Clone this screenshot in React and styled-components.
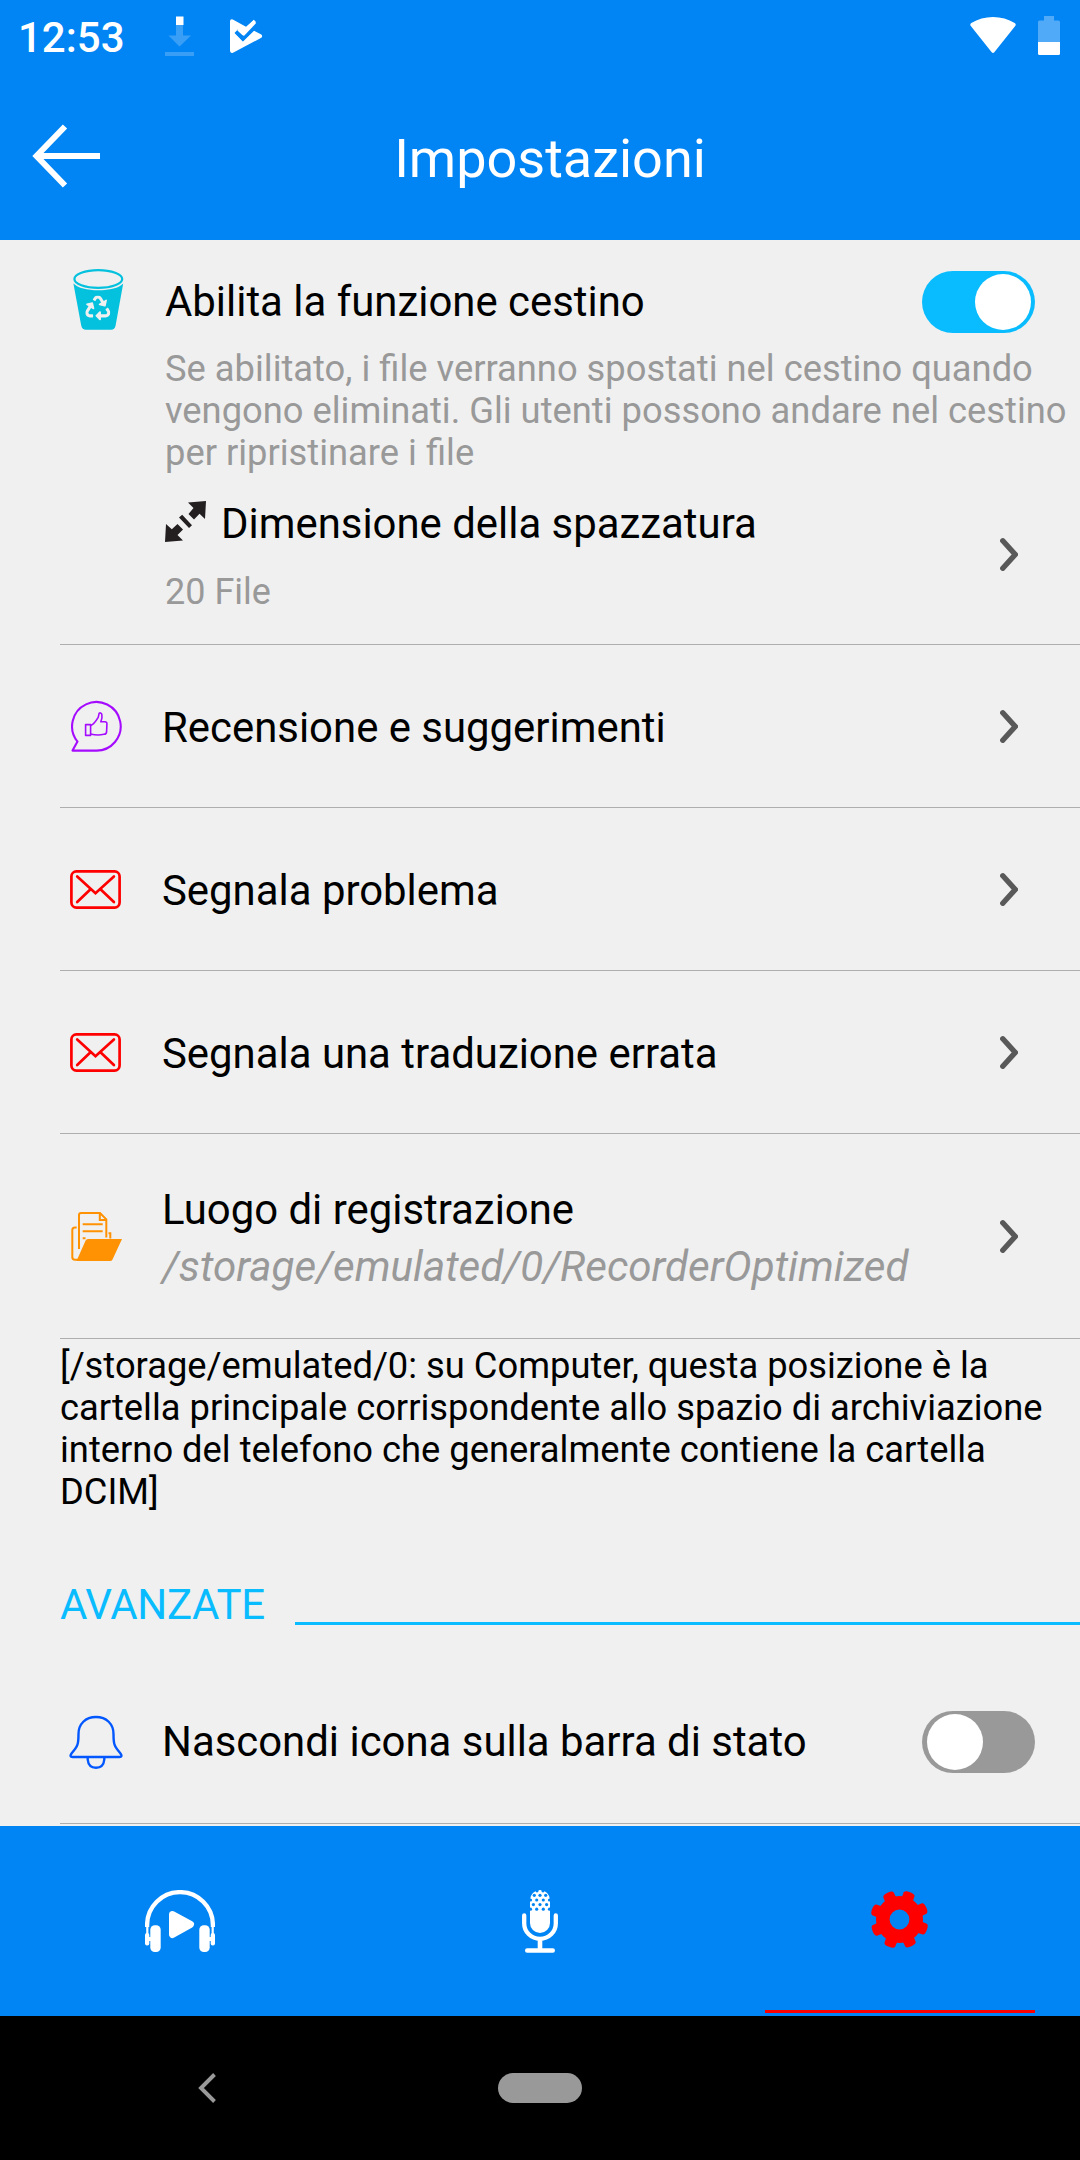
import React, { useState } from "react";
import styled, { createGlobalStyle } from "styled-components";
import { FaRecycle } from "react-icons/fa";

const c = {
  blue: "#0285f4",
  page: "#f0f0f0",
  line: "#aeaeae",
  muted: "#999999",
  accent: "#09bcff",
};

const GlobalStyle = createGlobalStyle`
  * { box-sizing: border-box; }
  body { margin: 0; background: ${c.page}; }
  svg { display: block; flex: none; }
`;

const Screen = styled.div`
  width: 1080px;
  height: 2160px;
  display: flex;
  flex-direction: column;
  overflow: hidden;
  background: ${c.page};
  color: #000;
  font-family: Roboto, "Noto Sans", sans-serif;
`;

const StatusBar = styled.header`
  height: 72px;
  flex: none;
  display: flex;
  align-items: flex-start;
  padding: 0 20px 0 18px;
  background: ${c.blue};
  color: #fff;
`;

const Clock = styled.span`
  width: 147px;
  padding-top: 14px;
  font-size: 42px;
  font-weight: 500;
  line-height: 48px;
`;

const StatusIcons = styled.div`
  display: flex;
  gap: ${(p) => p.$gap}px;
  padding-top: 16px;
  ${(p) => p.$end && "margin-left: auto;"}
`;

const TitleBar = styled.div`
  height: 168px;
  flex: none;
  display: flex;
  align-items: center;
  padding: 0 80px 0 32px;
  background: ${c.blue};
  color: #fff;
`;

const BackButton = styled.button`
  padding: 0;
  border: 0;
  background: none;
`;

const Title = styled.h1`
  flex: 1;
  margin: 0;
  padding-top: 5px;
  font-size: 54px;
  font-weight: 400;
  line-height: 64px;
  text-align: center;
`;

const Content = styled.main`
  flex: 1;
  min-height: 0;
  overflow: hidden;
  display: flex;
  flex-direction: column;
`;

const Divider = styled.hr`
  width: 1020px;
  height: 1px;
  flex: none;
  margin: 0 0 0 60px;
  border: 0;
  background: ${c.line};
`;

const Row = styled.div`
  height: ${(p) => p.$height || 162}px;
  flex: none;
  display: flex;
  align-items: center;
  padding: 0 ${(p) => p.$right || 62}px 0 60px;
`;

const AdvancedRow = styled(Row)`
  margin-top: 36px;
`;

const IconSlot = styled.div`
  width: ${(p) => p.$width || 102}px;
  flex: none;
  display: flex;
  padding: ${(p) => p.$top || 0}px 0 0 ${(p) => p.$left}px;
`;

const Texts = styled.div`
  flex: 1;
  display: flex;
  flex-direction: column;
  padding-top: ${(p) => p.$top || 0}px;
`;

const Label = styled.span`
  font-size: 41.9px;
  line-height: ${(p) => p.$line || 50}px;
  white-space: nowrap;
`;

const Path = styled(Label)`
  color: ${c.muted};
  font-size: 42.15px;
  font-style: italic;
`;

const TrashSection = styled.section`
  height: 404px;
  flex: none;
`;

const Description = styled.p`
  margin: 0 0 0 165px;
  font-size: 36.32px;
  line-height: 42px;
  color: ${c.muted};
  white-space: pre-line;
`;

const SizeRow = styled.div`
  display: flex;
  align-items: center;
  padding: 25px 62px 0 165px;
`;

const SizeTexts = styled.div`
  flex: 1;
  display: flex;
  flex-direction: column;
  gap: 22px;
`;

const SizeTitle = styled.div`
  display: flex;
  align-items: center;
  gap: 15px;
`;

const SizeValue = styled.span`
  font-size: 36px;
  line-height: 42px;
  color: ${c.muted};
`;

const Raised = styled.span`
  padding-bottom: 5px;
`;

const Track = styled.button`
  width: 113px;
  height: 62px;
  flex: none;
  display: flex;
  align-items: flex-start;
  justify-content: ${(p) => (p.$on ? "flex-end" : "flex-start")};
  padding: 3px 4px 0 5px;
  border: 0;
  border-radius: 31px;
  background: ${(p) => (p.$on ? c.accent : c.muted)};
`;

const Knob = styled.span`
  width: 56px;
  height: 56px;
  border-radius: 50%;
  background: #fff;
`;

const SwitchHolder = styled.div`
  padding-top: 16px;
`;

const Note = styled.p`
  margin: 6px 0 0 60px;
  font-size: 36.32px;
  line-height: 42px;
  white-space: pre-line;
`;

const SectionHead = styled.div`
  height: 46px;
  flex: none;
  display: flex;
  align-items: flex-end;
  gap: 30px;
  margin-top: 66px;
  padding-left: 60px;
  color: ${c.accent};
`;

const SectionTitle = styled.h2`
  width: 205px;
  margin: 0;
  font-size: 42px;
  font-weight: 400;
  line-height: 40px;
  letter-spacing: -0.3px;
`;

const SectionRule = styled.div`
  flex: 1;
  height: 3px;
  background: ${c.accent};
`;

const Tabs = styled.nav`
  height: 190px;
  flex: none;
  display: grid;
  grid-template-columns: repeat(3, 1fr);
  background: ${c.blue};
`;

const Tab = styled.button`
  display: flex;
  flex-direction: column;
  align-items: center;
  justify-content: space-between;
  padding: ${(p) => p.$top || 64}px 0 3px;
  border: 0;
  background: none;
`;

const TabMarker = styled.span`
  width: 270px;
  height: 3px;
  background: ${(p) => (p.$active ? "#ff0000" : "transparent")};
`;

const SystemNav = styled.footer`
  height: 144px;
  flex: none;
  display: flex;
  align-items: center;
  gap: 282px;
  padding-left: 198px;
  background: #000;
`;

const HomePill = styled.span`
  width: 84px;
  height: 30px;
  border-radius: 15px;
  background: ${c.muted};
`;

const DownloadIcon = () => (
  <svg width="29" height="40" viewBox="0 0 29 40">
    <path d="M11 9h7v10.500h8L14.500 30.500 3.500 19.500H11zM0 36h29v4H0z" fill="#fff" fillOpacity=".22" />
    <path d="M11 .5h7.500V9H11z" fill="#fff" />
  </svg>
);

const PlayCheckIcon = () => (
  <svg width="34" height="38" viewBox="0 0 34 38">
    <path
      d="M1 5.500Q1 2.500 3.800 3.400L17 10.800 24.500 4.200 26.500 6.200 14 18.800 8.800 13.400 5.500 17 14 25.500 25 14.800 32.300 18.600Q34 20.200 32.300 21.800L4 36.700Q1 37.600 1 34.500z"
      fill="#fff"
    />
    <path d="M16.500 12.200L24.800 3.800 26.800 5.800 13.700 19.500 8.300 14.500 9.500 13.500 13.700 17.300z" fill="#fff" />
    <path d="M6.500 17.200L8.800 15.200 13.700 19.700 18.500 15.200 24.300 12.500 25 14 13.700 25.300z" fill={c.blue} />
    <path d="M13.800 19L26 6" stroke="#fff" strokeWidth="3" />
  </svg>
);

const WifiIcon = () => (
  <svg width="46" height="38" viewBox="0 0 46 38">
    <path d="M1 10.200Q-.6 8.600 1.300 7Q11 1 23 1t21.700 6q1.900 1.600.3 3.200L24.300 36.300Q23 37.600 21.700 36.300z" fill="#fff" />
  </svg>
);

const BatteryIcon = () => (
  <svg width="22" height="39" viewBox="0 0 22 39">
    <path d="M6 0h10v4.500h4.500Q22 4.500 22 6v20H0V6q0-1.500 1.500-1.500H6z" fill="#fff" fillOpacity=".31" />
    <path d="M0 26h22v11.500q0 1.500-1.500 1.500h-19Q0 39 0 37.500z" fill="#fff" />
  </svg>
);

const BackArrow = () => (
  <svg width="68" height="64" viewBox="0 0 68 64">
    <path d="M33 2.500L4.500 32 33 61.500M5 32h63" fill="none" stroke="#fff" strokeWidth="6" />
  </svg>
);

const TrashIcon = () => (
  <svg width="51" height="62" viewBox="0 0 51 62">
    <ellipse cx="25.300" cy="10" rx="23.900" ry="8.800" fill="none" stroke="#04c1de" strokeWidth="2.200" />
    <path d="M.4 14.500C5 19 14 21.300 25.300 21.300S46 19 50.200 14.500L42.600 56.500Q41.700 60.800 38 60.800H13Q9.200 60.800 8.200 56.500z" fill="#04c1de" />
    <FaRecycle x="12.300" y="26.500" size="25" color={c.page} />
  </svg>
);

const ResizeIcon = () => (
  <svg width="41" height="41" viewBox="0 0 41 41">
    <path
      d="M41 0L23 1.500 28.500 7 23.500 13 29 18.500 34.500 12.800 40 18zM0 41L18 39.500 12.500 34 18 28.500 12.500 23 6.800 28.300 1 23zM14 16.500L17.200 13.700 27 24.300 24 27z"
      fill="#231f20"
    />
  </svg>
);

const ReviewIcon = () => (
  <svg width="52" height="52" viewBox="0 -0.600 52 52" fill="none" stroke="#a50bff" strokeWidth="2.100" strokeLinejoin="round">
    <path d="M25.600 50H2.500L7.500 41A24.300 24.300 0 1 1 25.600 50z" />
    <path d="M15.600 24H20.600V34.800H15.600z" strokeWidth="1.600" />
    <path
      d="M20.600 25C24.300 23.500 26.800 19 28.300 16.500L29.100 12.800Q30.500 11.500 31.800 13.500Q32.600 17 30.800 21.200H34.800Q37.300 21.400 36.900 23.800L36.600 31Q36.500 33.600 33.900 33.700C29.300 34.700 25.300 34.600 20.600 33.300"
      strokeWidth="1.600"
    />
  </svg>
);

const MailIcon = () => (
  <svg width="51" height="40" viewBox="0 -1 51 40" fill="none" stroke="#ff0000" strokeWidth="2.700" strokeLinecap="round">
    <rect x="1.400" y="1.400" width="48.200" height="36.200" rx="5" />
    <path d="M7.200 6.500L25.500 23.200 43.900 6.500M7.200 32L20.500 19.300M43.900 32L30.500 19.300" />
  </svg>
);

const FolderIcon = () => (
  <svg width="51" height="50" viewBox="0 -1 51 50" fill="none" stroke="#ff9203" strokeWidth="2">
    <path d="M5.700 15.500H4Q1.300 15.500 1.300 18V45Q1.300 47.800 4 47.800H7M8 37V3Q8 1 10 1H29L35.300 7.300V25.500M28.800 1V8H35.300M11.700 12.300H31.700M11.700 19.300H31.700M11.700 26.300H14.500M37.500 21.300H39.300V26.500" />
    <path d="M17 27H51L41.500 47.500Q40.800 49 39.200 49H5.500L14.500 28.800Q15.300 27 17 27z" fill="#ff9203" stroke="none" />
  </svg>
);

const BellIcon = () => (
  <svg width="54" height="56" viewBox="0 -1 54 56" fill="none" stroke="#0257ff" strokeWidth="2.400" strokeLinejoin="round">
    <path d="M27 2C16.500 2 9.500 9 9.500 19C9.500 29 9 31 2.500 38.500Q.2 42 3.500 42H50.500Q53.800 42 51.500 38.500C45 31 44.500 29 44.500 19C44.500 9 37.500 2 27 2z" />
    <path d="M18.700 42.500V44.500Q19.500 52.800 27 52.800T35.300 44.500V42.500" />
  </svg>
);

const Chevron = () => (
  <svg width="18" height="34" viewBox="0 -1 18 34">
    <path d="M2.800 2.800L15.200 16.500 2.800 30.200" fill="none" stroke="#595959" strokeWidth="5.400" strokeLinecap="round" />
  </svg>
);

const HeadphonesIcon = () => (
  <svg width="70" height="62" viewBox="0 0 70 62" fill="#fff">
    <path d="M2.100 37V35A32.900 32.900 0 0 1 67.900 35V37" fill="none" stroke="#fff" strokeWidth="4.300" />
    <path d="M1.200 37h2.200v7H1.200zM66.600 37h2.200v7h-2.200zM3 47h4v4H3zM63 47h4v4h-4z" />
    <rect x="0" y="43" width="4.300" height="12.500" rx="2" />
    <rect x="65.700" y="43" width="4.300" height="12.500" rx="2" />
    <rect x="5.300" y="35.300" width="10.400" height="26.700" rx="4.500" />
    <rect x="54.300" y="35.300" width="10.400" height="26.700" rx="4.500" />
    <path d="M27.500 24.500L45.500 34.400 27.500 44.500z" stroke="#fff" strokeWidth="7" strokeLinejoin="round" />
  </svg>
);

const grille = [
  [12.3, 5.3], [18, 5.3], [23.7, 5.3],
  [8.5, 10], [14.7, 10], [21.3, 10], [27.5, 10],
  [11.4, 14.6], [18, 14.6], [24.6, 14.6],
  [8.5, 19.2], [14.7, 19.2], [21.3, 19.2], [27.5, 19.2],
  [9.5, 1.5], [15, 0.8], [21, 0.8], [26.5, 1.5],
];

const MicIcon = () => (
  <svg width="36" height="63" viewBox="0 0 36 63">
    <rect x="8" y="0" width="20" height="43" rx="10" fill="#fff" />
    {grille.map(([x, y]) => (
      <circle key={`${x}-${y}`} cx={x} cy={y} r="1.600" fill={c.blue} />
    ))}
    <path d="M2.200 25.500V33.500A15.800 15.300 0 0 0 33.800 33.500V25.500" fill="none" stroke="#fff" strokeWidth="4.300" strokeLinecap="round" />
    <path d="M15.700 49h4.600v10h-4.600z" fill="#fff" />
    <rect x="3" y="58.300" width="30" height="4.500" rx="2.200" fill="#fff" />
  </svg>
);

const GearIcon = () => (
  <svg width="58" height="58" viewBox="-28.500 -28.500 58 58">
    {[0, 1, 2, 3, 4, 5, 6, 7].map((i) => (
      <path
        key={i}
        transform={`rotate(${21 + i * 45})`}
        d="M-6 -20L-5.700 -27Q-5.200 -29.300 0 -29.300T5.700 -27L6 -20V-15H-6z"
        fill="#ff0000"
      />
    ))}
    <circle r="16.700" fill="none" stroke="#ff0000" strokeWidth="13.600" />
  </svg>
);

const NavBackIcon = () => (
  <svg width="18" height="30" viewBox="0 0 18 30">
    <path d="M16.500 1.500L3 15 16.500 28.500" fill="none" stroke={c.muted} strokeWidth="3.900" />
  </svg>
);

function Switch({ initial }) {
  const [on, setOn] = useState(initial);
  return (
    <Track $on={on} role="switch" aria-checked={on} onClick={() => setOn(!on)}>
      <Knob />
    </Track>
  );
}

function LinkRow({ icon, left, label }) {
  return (
    <>
      <Row>
        <IconSlot $left={left}>{icon}</IconSlot>
        <Texts $top={4}>
          <Label>{label}</Label>
        </Texts>
        <Chevron />
      </Row>
      <Divider />
    </>
  );
}

export default function App() {
  return (
    <Screen>
      <GlobalStyle />
      <StatusBar>
        <Clock>12:53</Clock>
        <StatusIcons $gap={35}>
          <DownloadIcon />
          <PlayCheckIcon />
        </StatusIcons>
        <StatusIcons $gap={22} $end>
          <WifiIcon />
          <BatteryIcon />
        </StatusIcons>
      </StatusBar>
      <TitleBar>
        <BackButton>
          <BackArrow />
        </BackButton>
        <Title>Impostazioni</Title>
      </TitleBar>

      <Content>
        <TrashSection>
          <Row $height={108} $right={45}>
            <IconSlot $left={13} $width={105} $top={12}>
              <TrashIcon />
            </IconSlot>
            <Texts $top={16}>
              <Label>Abilita la funzione cestino</Label>
            </Texts>
            <SwitchHolder>
              <Switch initial />
            </SwitchHolder>
          </Row>
          <Description>
            {"Se abilitato, i file verranno spostati nel cestino quando\nvengono eliminati. Gli utenti possono andare nel cestino\nper ripristinare i file"}
          </Description>
          <SizeRow>
            <SizeTexts>
              <SizeTitle>
                <Raised>
                  <ResizeIcon />
                </Raised>
                <Label>Dimensione della spazzatura</Label>
              </SizeTitle>
              <SizeValue>20 File</SizeValue>
            </SizeTexts>
            <Raised>
              <Chevron />
            </Raised>
          </SizeRow>
        </TrashSection>
        <Divider />

        <LinkRow icon={<ReviewIcon />} left={10} label="Recensione e suggerimenti" />
        <LinkRow icon={<MailIcon />} left={10} label="Segnala problema" />
        <LinkRow icon={<MailIcon />} left={10} label="Segnala una traduzione errata" />

        <Row $height={204}>
          <IconSlot $left={11}>
            <FolderIcon />
          </IconSlot>
          <Texts $top={4}>
            <Label $line={57}>Luogo di registrazione</Label>
            <Path $line={57}>/storage/emulated/0/RecorderOptimized</Path>
          </Texts>
          <Chevron />
        </Row>
        <Divider />
        <Note>
          {"[/storage/emulated/0: su Computer, questa posizione è la\ncartella principale corrispondente allo spazio di archiviazione\ninterno del telefono che generalmente contiene la cartella\nDCIM]"}
        </Note>

        <SectionHead>
          <SectionTitle>AVANZATE</SectionTitle>
          <SectionRule />
        </SectionHead>

        <AdvancedRow $right={45}>
          <IconSlot $left={9}>
            <BellIcon />
          </IconSlot>
          <Texts>
            <Label>Nascondi icona sulla barra di stato</Label>
          </Texts>
          <Switch initial={false} />
        </AdvancedRow>
        <Divider />
      </Content>

      <Tabs>
        <Tab>
          <HeadphonesIcon />
          <TabMarker />
        </Tab>
        <Tab>
          <MicIcon />
          <TabMarker />
        </Tab>
        <Tab $top={65}>
          <GearIcon />
          <TabMarker $active />
        </Tab>
      </Tabs>
      <SystemNav>
        <NavBackIcon />
        <HomePill />
      </SystemNav>
    </Screen>
  );
}
